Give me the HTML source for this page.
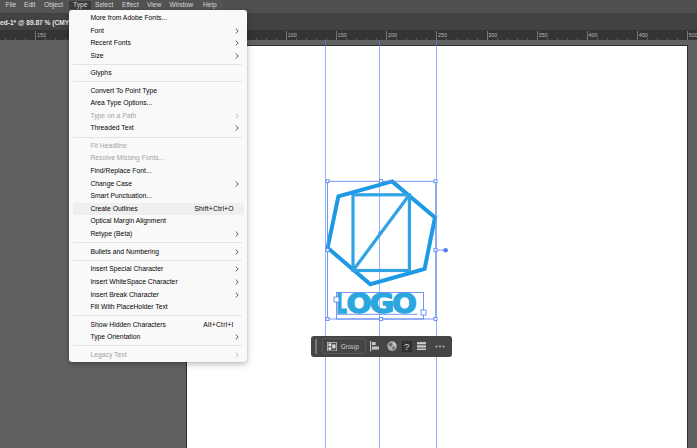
<!DOCTYPE html>
<html><head><meta charset="utf-8"><title>Illustrator - Type menu</title>
<style>
html,body{margin:0;padding:0}
body{width:697px;height:448px;overflow:hidden;background:#616161;position:relative;font-family:"Liberation Sans",sans-serif;}
.abs{position:absolute}
#menubar{position:absolute;left:0;top:0;width:697px;height:13px;background:#4f4f4f}
#menubar .lt{position:absolute;left:0;top:0;width:223px;height:13px;background:#535353}
#menubar span{position:absolute;top:0;height:10px;line-height:9.5px;font-size:6.6px;color:#d8d8d8;white-space:nowrap}
#menubar .sel{background:#3b3b3b;left:69px;width:22px;top:1px;height:8px}
#tabbar{position:absolute;left:0;top:13px;width:697px;height:18px;background:#424242}
#tabbar span{position:absolute;left:0;top:4.5px;font-size:6.6px;font-weight:bold;color:#e6e6e6;white-space:nowrap;line-height:10px}
#ruler{position:absolute;left:0;top:30px;width:697px;height:10px;background:#343434;overflow:hidden}
.tk{position:absolute;top:1px;width:1px;height:9px;background:#757575}
.tm{position:absolute;top:7.5px;width:1px;height:2.5px;background:#5c5c5c}
.rl{position:absolute;top:1.5px;font-size:5.4px;line-height:6px;color:#b8b8b8}
#art{position:absolute;left:187px;top:46px;width:500px;height:402px;background:#fff}
#artb{position:absolute;left:186px;top:45px;width:502px;height:404px;background:#2e2e2e}
.guide{position:absolute;top:40px;width:1px;height:408px;background:rgba(84,136,246,.62)}
#menu{position:absolute;left:69px;top:10px;width:178px;height:352px;background:#f9f9f9;border-radius:3px;box-shadow:0 2px 6px rgba(0,0,0,.28),0 0 1px rgba(0,0,0,.35)}
.mi{position:absolute;left:4px;width:171px;height:12px;border-radius:2px}
.mi.hl{background:#efefef}
.mi .lb{position:absolute;left:17.4px;top:0;line-height:12px;font-size:6.8px;color:#050505;white-space:nowrap}
.mi .sc{position:absolute;top:0;right:10.3px;line-height:12px;font-size:6.8px;color:#050505;white-space:nowrap}
.mi.dis .lb{color:#a3a3a3}
.mi .ar{position:absolute;left:162px;top:3px;stroke:#3a3a3a}
.mi.dis .ar{stroke:#b5b5b5}
.sep{position:absolute;left:4px;width:169px;height:1px;background:#e3e3e3}
#bar{position:absolute;left:311px;top:336px;width:141px;height:21px;background:#454545;border-radius:3px}
</style></head><body>
<div id="menubar"><div class="lt"></div><div class="sel abs"></div>
<span style="left:5.5px">File</span><span style="left:24px">Edit</span><span style="left:44px">Object</span><span style="left:73px">Type</span><span style="left:95px">Select</span><span style="left:122px">Effect</span><span style="left:147px">View</span><span style="left:169.5px">Window</span><span style="left:203px">Help</span>
</div>
<div id="tabbar"><span>ed-1* @ 89.87 % (CMYK/Preview)</span></div>
<div id="ruler"><i class="tk" style="left:-14.9px"></i><i class="tm" style="left:-4.8px"></i><i class="tm" style="left:5.2px"></i><i class="tm" style="left:15.2px"></i><i class="tm" style="left:25.3px"></i><i class="tk" style="left:35.3px"></i><i class="tm" style="left:45.3px"></i><i class="tm" style="left:55.3px"></i><i class="tm" style="left:65.4px"></i><i class="tm" style="left:75.4px"></i><i class="tk" style="left:85.4px"></i><i class="tm" style="left:95.4px"></i><i class="tm" style="left:105.5px"></i><i class="tm" style="left:115.5px"></i><i class="tm" style="left:125.5px"></i><i class="tk" style="left:135.6px"></i><i class="tm" style="left:145.6px"></i><i class="tm" style="left:155.6px"></i><i class="tm" style="left:165.6px"></i><i class="tm" style="left:175.7px"></i><i class="tk" style="left:185.7px"></i><i class="tm" style="left:195.7px"></i><i class="tm" style="left:205.8px"></i><i class="tm" style="left:215.8px"></i><i class="tm" style="left:225.8px"></i><i class="tk" style="left:235.8px"></i><i class="tm" style="left:245.9px"></i><i class="tm" style="left:255.9px"></i><i class="tm" style="left:265.9px"></i><i class="tm" style="left:276.0px"></i><i class="tk" style="left:286.0px"></i><i class="tm" style="left:296.0px"></i><i class="tm" style="left:306.0px"></i><i class="tm" style="left:316.1px"></i><i class="tm" style="left:326.1px"></i><i class="tk" style="left:336.1px"></i><i class="tm" style="left:346.1px"></i><i class="tm" style="left:356.2px"></i><i class="tm" style="left:366.2px"></i><i class="tm" style="left:376.2px"></i><i class="tk" style="left:386.3px"></i><i class="tm" style="left:396.3px"></i><i class="tm" style="left:406.3px"></i><i class="tm" style="left:416.3px"></i><i class="tm" style="left:426.4px"></i><i class="tk" style="left:436.4px"></i><i class="tm" style="left:446.4px"></i><i class="tm" style="left:456.5px"></i><i class="tm" style="left:466.5px"></i><i class="tm" style="left:476.5px"></i><i class="tk" style="left:486.5px"></i><i class="tm" style="left:496.6px"></i><i class="tm" style="left:506.6px"></i><i class="tm" style="left:516.6px"></i><i class="tm" style="left:526.7px"></i><i class="tk" style="left:536.7px"></i><i class="tm" style="left:546.7px"></i><i class="tm" style="left:556.7px"></i><i class="tm" style="left:566.8px"></i><i class="tm" style="left:576.8px"></i><i class="tk" style="left:586.8px"></i><i class="tm" style="left:596.8px"></i><i class="tm" style="left:606.9px"></i><i class="tm" style="left:616.9px"></i><i class="tm" style="left:626.9px"></i><i class="tk" style="left:637.0px"></i><i class="tm" style="left:647.0px"></i><i class="tm" style="left:657.0px"></i><i class="tm" style="left:667.0px"></i><i class="tm" style="left:677.1px"></i><i class="tk" style="left:687.1px"></i><i class="tm" style="left:697.1px"></i><i class="tm" style="left:707.2px"></i><i class="tm" style="left:717.2px"></i><i class="tm" style="left:727.2px"></i><span class="rl" style="left:-13.2px">200</span><span class="rl" style="left:37.0px">150</span><span class="rl" style="left:87.1px">100</span><span class="rl" style="left:137.3px">50</span><span class="rl" style="left:187.4px">0</span><span class="rl" style="left:237.5px">50</span><span class="rl" style="left:287.7px">100</span><span class="rl" style="left:337.8px">150</span><span class="rl" style="left:388.0px">200</span><span class="rl" style="left:438.1px">250</span><span class="rl" style="left:488.2px">300</span><span class="rl" style="left:538.4px">350</span><span class="rl" style="left:588.5px">400</span><span class="rl" style="left:638.7px">450</span><span class="rl" style="left:688.8px">500</span></div>
<div id="artb"></div><div id="art"></div>
<div class="guide" style="left:325px"></div><div class="guide" style="left:379px"></div><div class="guide" style="left:436px"></div>

<svg class="abs" style="left:0;top:0" width="697" height="448" viewBox="0 0 697 448">
 <!-- logo -->
 <polygon points="392.1,181.4 435,217.4 424.6,269 370.3,284.3 327.6,247.8 338.4,196.3" fill="none" stroke="#1d9ae3" stroke-width="4" stroke-linejoin="miter"/>
 <rect x="353" y="194.8" width="56.4" height="75.7" fill="none" stroke="#2fa4e5" stroke-width="3.2"/>
 <line x1="353" y1="270.5" x2="409.4" y2="194.8" stroke="#2fa4e5" stroke-width="3.2"/>
 <g font-family="'DejaVu Sans',sans-serif" font-weight="bold" font-size="27.4" fill="#2ba7df" stroke="#2ba7df" stroke-width="1.3" stroke-linejoin="round">
  <text transform="translate(336.2,313.2) scale(0.61,1)">L</text>
  <text transform="translate(346.5,313.2) scale(1.08,1)">O</text>
  <text transform="translate(369.7,313.2) scale(1.09,1)">G</text>
  <text transform="translate(392,313.2) scale(1.07,1)">O</text>
 </g>
 <!-- selection -->
 <g fill="none" stroke="#668cf8" stroke-width="0.9">
  <rect x="327.5" y="181.3" width="108.2" height="137.7"/>
  <rect x="336.5" y="292.5" width="87" height="26.5"/>
  <line x1="336.5" y1="314.3" x2="417.5" y2="314.3"/>
  <line x1="436" y1="250.2" x2="445" y2="250.2"/>
 </g>
 <g fill="#fff" stroke="#5f8af0" stroke-width="0.9">
  <rect x="326" y="179.7" width="3" height="3"/><rect x="379.5" y="179.7" width="3" height="3"/><rect x="434" y="179.7" width="3" height="3"/>
  <rect x="326" y="248.7" width="3" height="3"/><rect x="434" y="248.7" width="3" height="3"/>
  <rect x="326" y="317.5" width="3" height="3"/><rect x="379.7" y="317.5" width="3" height="3"/><rect x="434" y="317.5" width="3" height="3"/>
  <rect x="334" y="297" width="5" height="5"/><rect x="421" y="310" width="5" height="5"/>
 </g>
 <circle cx="445.6" cy="250.2" r="2.3" fill="#4f7df3"/>
 <rect x="378.5" y="231.5" width="2.5" height="2.5" fill="#5b86ee"/>
</svg>

<div id="menu">
<div class="mi" style="top:1.7000000000000002px"><span class="lb">More from Adobe Fonts...</span></div>
<div class="mi" style="top:14.7px"><span class="lb">Font</span><svg class="ar" width="4" height="6" viewBox="0 0 4 6"><path d="M0.7 0.6 L3.2 3 L0.7 5.4" fill="none" stroke-width="0.8"/></svg></div>
<div class="mi" style="top:27.2px"><span class="lb">Recent Fonts</span><svg class="ar" width="4" height="6" viewBox="0 0 4 6"><path d="M0.7 0.6 L3.2 3 L0.7 5.4" fill="none" stroke-width="0.8"/></svg></div>
<div class="mi" style="top:39.7px"><span class="lb">Size</span><svg class="ar" width="4" height="6" viewBox="0 0 4 6"><path d="M0.7 0.6 L3.2 3 L0.7 5.4" fill="none" stroke-width="0.8"/></svg></div>
<div class="sep" style="top:53.5px"></div>
<div class="mi" style="top:57.2px"><span class="lb">Glyphs</span></div>
<div class="sep" style="top:70.5px"></div>
<div class="mi" style="top:74.7px"><span class="lb">Convert To Point Type</span></div>
<div class="mi" style="top:87.2px"><span class="lb">Area Type Options...</span></div>
<div class="mi dis" style="top:99.7px"><span class="lb">Type on a Path</span><svg class="ar" width="4" height="6" viewBox="0 0 4 6"><path d="M0.7 0.6 L3.2 3 L0.7 5.4" fill="none" stroke-width="0.8"/></svg></div>
<div class="mi" style="top:112.2px"><span class="lb">Threaded Text</span><svg class="ar" width="4" height="6" viewBox="0 0 4 6"><path d="M0.7 0.6 L3.2 3 L0.7 5.4" fill="none" stroke-width="0.8"/></svg></div>
<div class="sep" style="top:126.5px"></div>
<div class="mi dis" style="top:129.7px"><span class="lb">Fit Headline</span></div>
<div class="mi dis" style="top:142.2px"><span class="lb">Resolve Missing Fonts...</span></div>
<div class="mi" style="top:154.7px"><span class="lb">Find/Replace Font...</span></div>
<div class="mi" style="top:167.7px"><span class="lb">Change Case</span><svg class="ar" width="4" height="6" viewBox="0 0 4 6"><path d="M0.7 0.6 L3.2 3 L0.7 5.4" fill="none" stroke-width="0.8"/></svg></div>
<div class="mi" style="top:180.2px"><span class="lb">Smart Punctuation...</span></div>
<div class="mi hl" style="top:192.7px"><span class="lb">Create Outlines</span><span class="sc" style="letter-spacing:0.16px">Shift+Ctrl+O</span></div>
<div class="mi" style="top:205.2px"><span class="lb">Optical Margin Alignment</span></div>
<div class="mi" style="top:218.2px"><span class="lb">Retype (Beta)</span><svg class="ar" width="4" height="6" viewBox="0 0 4 6"><path d="M0.7 0.6 L3.2 3 L0.7 5.4" fill="none" stroke-width="0.8"/></svg></div>
<div class="sep" style="top:231.5px"></div>
<div class="mi" style="top:235.7px"><span class="lb">Bullets and Numbering</span><svg class="ar" width="4" height="6" viewBox="0 0 4 6"><path d="M0.7 0.6 L3.2 3 L0.7 5.4" fill="none" stroke-width="0.8"/></svg></div>
<div class="sep" style="top:249.5px"></div>
<div class="mi" style="top:253.2px"><span class="lb">Insert Special Character</span><svg class="ar" width="4" height="6" viewBox="0 0 4 6"><path d="M0.7 0.6 L3.2 3 L0.7 5.4" fill="none" stroke-width="0.8"/></svg></div>
<div class="mi" style="top:265.7px"><span class="lb">Insert WhiteSpace Character</span><svg class="ar" width="4" height="6" viewBox="0 0 4 6"><path d="M0.7 0.6 L3.2 3 L0.7 5.4" fill="none" stroke-width="0.8"/></svg></div>
<div class="mi" style="top:278.7px"><span class="lb">Insert Break Character</span><svg class="ar" width="4" height="6" viewBox="0 0 4 6"><path d="M0.7 0.6 L3.2 3 L0.7 5.4" fill="none" stroke-width="0.8"/></svg></div>
<div class="mi" style="top:291.2px"><span class="lb">Fill With PlaceHolder Text</span></div>
<div class="sep" style="top:304.5px"></div>
<div class="mi" style="top:308.7px"><span class="lb">Show Hidden Characters</span><span class="sc" style="letter-spacing:0.22px">Alt+Ctrl+I</span></div>
<div class="mi" style="top:321.2px"><span class="lb">Type Orientation</span><svg class="ar" width="4" height="6" viewBox="0 0 4 6"><path d="M0.7 0.6 L3.2 3 L0.7 5.4" fill="none" stroke-width="0.8"/></svg></div>
<div class="sep" style="top:334.5px"></div>
<div class="mi dis" style="top:338.7px"><span class="lb">Legacy Text</span><svg class="ar" width="4" height="6" viewBox="0 0 4 6"><path d="M0.7 0.6 L3.2 3 L0.7 5.4" fill="none" stroke-width="0.8"/></svg></div>
</div>

<div id="bar">
 <div class="abs" style="left:3.6px;top:3px;width:2.6px;height:15px;background:#777"></div>
 <div class="abs" style="left:11.2px;top:1.8px;width:43.4px;height:16.6px;border:0.8px solid #585858;border-radius:2px;box-sizing:border-box"></div>
 <svg class="abs" style="left:16.3px;top:5.8px" width="9.8" height="9.3" viewBox="0 0 9.8 9.3"><rect x="0.4" y="0.4" width="9" height="8.5" fill="#4a4a4a" stroke="#c4c4c4" stroke-width="0.8"/><rect x="1.5" y="1.4" width="2.8" height="2.8" fill="#ececec"/><rect x="1.5" y="5.2" width="2.8" height="2.7" fill="#e0e0e0"/><rect x="5.2" y="2.4" width="3.3" height="4" fill="#d6d6d6"/></svg>
 <span class="abs" style="left:29.7px;top:5px;font-size:6.5px;line-height:11px;color:#d0d0d0">Group</span>
 <svg class="abs" style="left:59px;top:5.2px" width="10" height="10.4" viewBox="0 0 10 10.4"><rect x="0" y="0" width="1.2" height="10.4" fill="#c6c6c6"/><rect x="2" y="1.1" width="3.7" height="3" fill="#c6c6c6"/><rect x="2" y="5.5" width="7" height="3.1" fill="#c6c6c6"/></svg>
 <svg class="abs" style="left:76.2px;top:5.3px" width="10.2" height="10.2" viewBox="0 0 10 10"><circle cx="5" cy="5" r="4.7" fill="#adadad"/><path d="M1.6 3 L4.6 1.8 L5.6 3.8 L4 5.4 L2.2 5Z M5 6.2 L7.8 5.6 L7.4 8 L5.4 8.6Z" fill="#6a6a6a"/><path d="M6.2 1.2 A4.2 4.2 0 0 1 8.9 3.8 L7.4 4 L6 2.6Z" fill="#d2d2d2"/></svg>
 <div class="abs" style="left:90.5px;top:5px;width:10.4px;height:10.7px;background:#343434;border:0.7px solid #2c2c2c;box-sizing:border-box"></div>
 <span class="abs" style="left:90.5px;top:5px;width:10.4px;text-align:center;font-size:9.6px;line-height:11.2px;color:#dcdcdc">?</span>
 <svg class="abs" style="left:106px;top:5.7px" width="9.4" height="8.8" viewBox="0 0 9.4 8.8"><rect x="0" y="0.1" width="9.4" height="2.2" fill="#cacaca"/><rect x="0" y="3.3" width="9.4" height="2.2" fill="#cacaca"/><rect x="0" y="6.5" width="9.4" height="2.2" fill="#cacaca"/></svg>
 <svg class="abs" style="left:123.8px;top:9.2px" width="11" height="3" viewBox="0 0 11 3"><circle cx="1.5" cy="1.5" r="1.05" fill="#b4b4b4"/><circle cx="5" cy="1.5" r="1.05" fill="#b4b4b4"/><circle cx="8.5" cy="1.5" r="1.05" fill="#b4b4b4"/></svg>
</div>
</body></html>
